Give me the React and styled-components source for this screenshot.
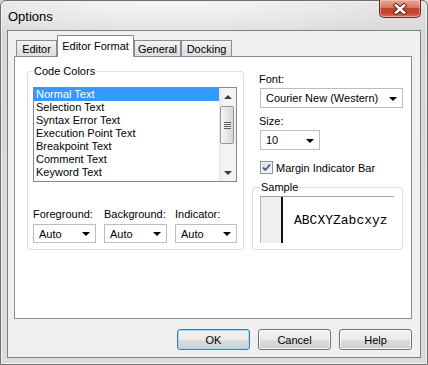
import React from 'react';
import styled, { createGlobalStyle } from 'styled-components';

const GlobalStyle = createGlobalStyle`
  html, body {
    margin: 0;
    padding: 0;
  }
  body {
    font-family: 'Liberation Sans', Arial, sans-serif;
    font-size: 11px;
    color: #000;
    background: #d6d6d6;
  }
`;

// window frame
const Window = styled.div`
  width: 428px;
  height: 365px;
  box-sizing: border-box;
  display: flex;
  flex-direction: column;
  border: 1px solid #6f6f6f;
  border-radius: 6px 6px 0 0;
  background:
    radial-gradient(ellipse 260px 40px at 40% 0%, #f7f7f7 0%, rgba(247, 247, 247, 0) 100%),
    linear-gradient(#e2e2e2, #d8d8d8 40px, #dcdcdc);
  box-shadow: inset 0 0 0 1px #f2f2f2;
`;

const TitleBar = styled.div`
  height: 29px;
  display: flex;
  align-items: center;
  justify-content: space-between;
  padding-left: 7px;
`;

const Title = styled.span`
  font-size: 13px;
  color: #000;
  margin-top: 1px;
`;

const CloseButton = styled.div`
  align-self: flex-start;
  margin-top: -1px;
  margin-right: 6px;
  width: 42px;
  height: 18px;
  box-sizing: border-box;
  display: flex;
  align-items: center;
  justify-content: center;
  border: 1px solid #6b2a1f;
  border-top: none;
  border-radius: 0 0 5px 5px;
  background: linear-gradient(#e9a99a 0%, #d8765f 45%, #c2412a 50%, #c94a31 80%, #d9785c 100%);
  box-shadow: inset 0 0 0 1px rgba(255, 210, 200, 0.5);
`;

// client area
const Client = styled.div`
  flex: 1;
  margin: 0 6px 6px 6px;
  border: 1px solid #7f7f7f;
  background: #f0f0f0;
  display: flex;
  flex-direction: column;
  padding: 4px 8px 7px 6px;
`;

const TabStrip = styled.div`
  display: flex;
  align-items: flex-end;
  height: 21px;
  padding-left: 2px;
`;

const Tab = styled.div`
  width: ${(p) => p.$w}px;
  height: ${(p) => (p.$active ? 22 : 16)}px;
  box-sizing: border-box;
  display: flex;
  align-items: center;
  justify-content: center;
  border: 1px solid #898c95;
  border-bottom: none;
  margin-bottom: ${(p) => (p.$active ? -1 : 0)}px;
  padding-bottom: ${(p) => (p.$active ? 2 : 0)}px;
  position: relative;
  z-index: ${(p) => (p.$active ? 1 : 0)};
  background: ${(p) => (p.$active ? '#fff' : 'linear-gradient(#f3f3f3, #e6e6e6 50%, #dedede)')};
`;

const Panel = styled.div`
  height: 263px;
  box-sizing: border-box;
  border: 1px solid #898c95;
  background: #fff;
  display: flex;
  gap: 8px;
  padding: 7px 8px 0 12px;
`;

const GroupBox = styled.fieldset`
  margin: ${(p) => p.$mt || 0}px 0 0 0;
  width: ${(p) => p.$w}px;
  height: ${(p) => p.$h}px;
  box-sizing: border-box;
  min-width: 0;
  border: 1px solid #d5dfe5;
  border-radius: 3px;
  padding: ${(p) => p.$pad};
`;

const Legend = styled.legend`
  padding: 0 1px;
  line-height: 14px;
  font-size: 11px;
`;

const ListBox = styled.div`
  width: 204px;
  height: 95px;
  box-sizing: border-box;
  border: 1px solid #828790;
  display: flex;
  background: #fff;
`;

const ListItems = styled.div`
  flex: 1;
`;

const ListItem = styled.div`
  height: 13px;
  line-height: 13px;
  padding-left: 2px;
  white-space: nowrap;
  background: ${(p) => (p.$selected ? '#3399ff' : 'transparent')};
  color: ${(p) => (p.$selected ? '#fff' : '#000')};
`;

const ScrollBar = styled.div`
  width: 17px;
  display: flex;
  flex-direction: column;
  background: linear-gradient(to right, #e9e9e9, #f5f5f5 40%, #f2f2f2);
`;

const ScrollArrow = styled.div`
  height: 17px;
  display: flex;
  align-items: center;
  justify-content: center;
  &::after {
    content: '';
    border-left: 4px solid transparent;
    border-right: 4px solid transparent;
    ${(p) => (p.$up ? 'border-bottom: 4px solid #3a3a3a;' : 'border-top: 4px solid #3a3a3a;')}
  }
`;

const ScrollTrack = styled.div`
  flex: 1;
`;

const Thumb = styled.div`
  margin: 1px 2px 0 1px;
  height: 38px;
  box-sizing: border-box;
  border: 1px solid #979797;
  border-radius: 2px;
  background: linear-gradient(to right, #f6f6f6, #e6e6e6 50%, #d6d6d6);
  display: flex;
  align-items: center;
  justify-content: center;
`;

const Grip = styled.div`
  width: 7px;
  height: 7px;
  background: repeating-linear-gradient(#5e5e5e 0 1px, #eeeeee 1px 2px);
`;

const ColorGrid = styled.div`
  margin-top: 26px;
  display: grid;
  grid-template-columns: 63px 63px 62px;
  column-gap: 8px;
`;

const FieldLabel = styled.div`
  line-height: 13px;
  margin-left: ${(p) => p.$ml || 0}px;
  margin-top: ${(p) => p.$mt || 0}px;
  white-space: nowrap;
`;

const Combo = styled.div`
  width: ${(p) => p.$w}px;
  height: ${(p) => p.$h}px;
  box-sizing: border-box;
  margin-top: ${(p) => p.$mt || 0}px;
  margin-left: ${(p) => p.$ml || 0}px;
  border: 1px solid #bdbdbd;
  background: #fff;
  display: flex;
  align-items: center;
  justify-content: space-between;
  padding: 0 5px 0 5px;
  white-space: nowrap;
`;

const Caret = styled.span`
  width: 0;
  height: 0;
  border-left: 4px solid transparent;
  border-right: 4px solid transparent;
  border-top: 4px solid #000;
  margin-top: 1px;
`;

const RightColumn = styled.div`
  width: 151px;
  display: flex;
  flex-direction: column;
  padding-top: 9px;
`;

const CheckRow = styled.div`
  display: flex;
  align-items: center;
  gap: 3px;
  margin: 11px 0 0 8px;
  height: 13px;
`;

const CheckBox = styled.div`
  width: 13px;
  height: 13px;
  box-sizing: border-box;
  border: 1px solid #8e8f8f;
  background: linear-gradient(135deg, #d6dbe9, #f4f6fb);
  box-shadow: inset 0 0 0 1px #f4f4f4;
  display: flex;
  align-items: center;
  justify-content: center;
`;

const SampleBox = styled.div`
  width: 134px;
  height: 47px;
  box-sizing: border-box;
  border-top: 1px solid #a0a0a0;
  border-left: 1px solid #b4b4b4;
  display: flex;
`;

const Gutter = styled.div`
  width: 20px;
  background: #efefef;
  border-right: 2px solid #111;
`;

const SampleText = styled.div`
  flex: 1;
  display: flex;
  align-items: center;
  padding-left: 11px;
  font-family: 'Liberation Mono', 'Courier New', monospace;
  font-size: 13px;
`;

const ButtonRow = styled.div`
  margin-top: 10px;
  display: flex;
  justify-content: flex-end;
  gap: 8px;
`;

const Button = styled.div`
  width: 73px;
  height: 21px;
  box-sizing: border-box;
  display: flex;
  align-items: center;
  justify-content: center;
  border: 1px solid ${(p) => (p.$default ? '#3c7fb1' : '#707070')};
  border-radius: 3px;
  background: linear-gradient(#f2f2f2 0%, #ebebeb 50%, #dddddd 51%, #cfcfcf 100%);
  box-shadow: inset 0 0 0 1px ${(p) => (p.$default ? '#9fd8f6' : '#fbfbfb')};
`;

const CloseGlyph = () => (
  <svg width="16" height="12" viewBox="0 0 16 12">
    <path d="M4 2.5 L12 9.5 M12 2.5 L4 9.5" stroke="#5a2a22" strokeWidth="4.6" strokeLinecap="square" />
    <path d="M4 2.5 L12 9.5 M12 2.5 L4 9.5" stroke="#fff" strokeWidth="2.6" strokeLinecap="square" />
  </svg>
);

const CheckMark = () => (
  <svg width="9" height="9" viewBox="0 0 9 9">
    <path d="M1 4.5 L3.5 7 L8 1.5" fill="none" stroke="#4a5c86" strokeWidth="1.8" />
  </svg>
);

const codeItems = [
  'Normal Text',
  'Selection Text',
  'Syntax Error Text',
  'Execution Point Text',
  'Breakpoint Text',
  'Comment Text',
  'Keyword Text',
];

const tabs = [
  { label: 'Editor', w: 41 },
  { label: 'Editor Format', w: 77, active: true },
  { label: 'General', w: 47 },
  { label: 'Docking', w: 51 },
];

const colorCombos = [
  { label: 'Foreground:', w: 63 },
  { label: 'Background:', w: 63 },
  { label: 'Indicator:', w: 62 },
];

export default function App() {
  return (
    <>
      <GlobalStyle />
      <Window>
        <TitleBar>
          <Title>Options</Title>
          <CloseButton>
            <CloseGlyph />
          </CloseButton>
        </TitleBar>
        <Client>
          <TabStrip>
            {tabs.map((t) => (
              <Tab key={t.label} $w={t.w} $active={t.active}>
                {t.label}
              </Tab>
            ))}
          </TabStrip>
          <Panel>
            <GroupBox $w={217} $h={186} $pad="9px 6px 6px 5px">
              <Legend>Code Colors</Legend>
              <ListBox>
                <ListItems>
                  {codeItems.map((item, i) => (
                    <ListItem key={item} $selected={i === 0}>
                      {item}
                    </ListItem>
                  ))}
                </ListItems>
                <ScrollBar>
                  <ScrollArrow $up />
                  <ScrollTrack>
                    <Thumb>
                      <Grip />
                    </Thumb>
                  </ScrollTrack>
                  <ScrollArrow />
                </ScrollBar>
              </ListBox>
              <ColorGrid>
                {colorCombos.map((c) => (
                  <div key={c.label}>
                    <FieldLabel>{c.label}</FieldLabel>
                    <Combo $w={c.w} $h={19} $mt={3}>
                      Auto
                      <Caret />
                    </Combo>
                  </div>
                ))}
              </ColorGrid>
            </GroupBox>
            <RightColumn>
              <FieldLabel $ml={7}>Font:</FieldLabel>
              <Combo $w={143} $h={20} $mt={2} $ml={8}>
                Courier New (Western)
                <Caret />
              </Combo>
              <FieldLabel $ml={7} $mt={7}>Size:</FieldLabel>
              <Combo $w={60} $h={20} $mt={2} $ml={8}>
                10
                <Caret />
              </Combo>
              <CheckRow>
                <CheckBox>
                  <CheckMark />
                </CheckBox>
                Margin Indicator Bar
              </CheckRow>
              <GroupBox $w={151} $h={70} $mt={6} $pad="2px 6px 6px 7px">
                <Legend>Sample</Legend>
                <SampleBox>
                  <Gutter />
                  <SampleText>ABCXYZabcxyz</SampleText>
                </SampleBox>
              </GroupBox>
            </RightColumn>
          </Panel>
          <ButtonRow>
            <Button $default>OK</Button>
            <Button>Cancel</Button>
            <Button>Help</Button>
          </ButtonRow>
        </Client>
      </Window>
    </>
  );
}
